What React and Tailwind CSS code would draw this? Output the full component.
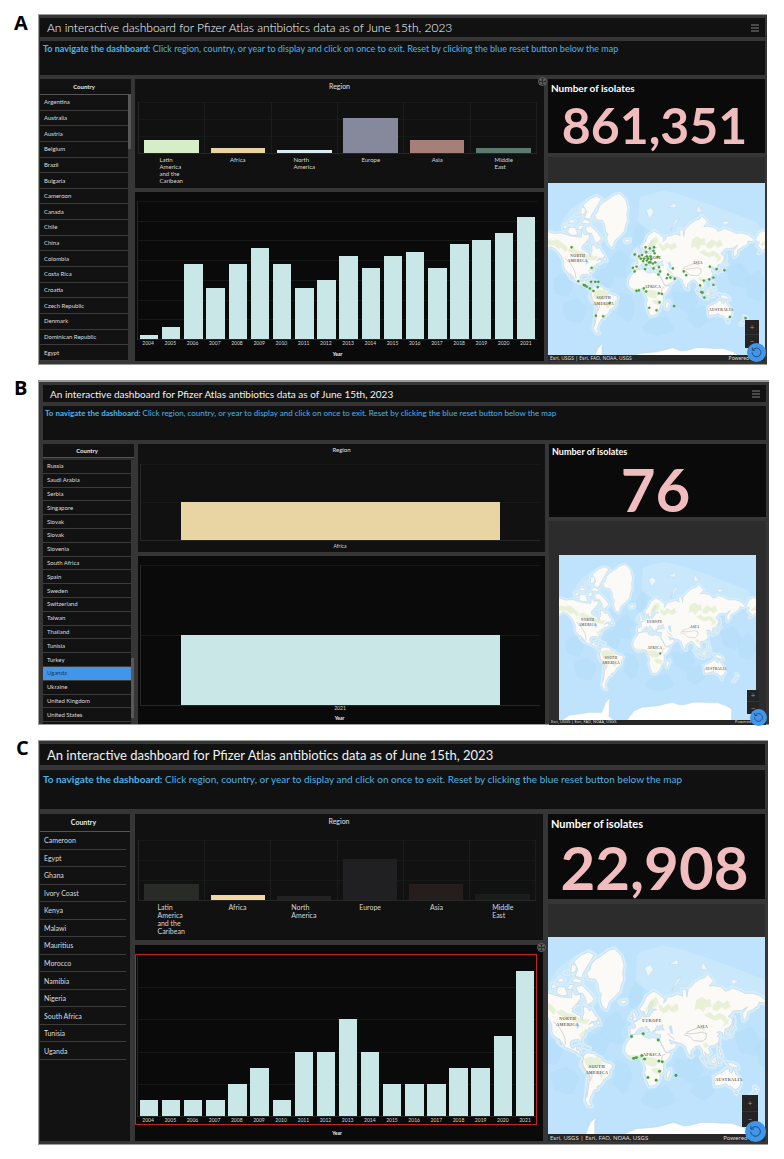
import React, { useState } from 'react';
import clsx from 'clsx';

const YEARS = ['2004', '2005', '2006', '2007', '2008', '2009', '2010', '2011', '2012', '2013', '2014', '2015', '2016', '2017', '2018', '2019', '2020', '2021'];

const toYearBars = (values) => values.map((value, i) => ({ label: YEARS[i], value, color: '#c9e7e7' }));

const ALL_COUNTRIES = ['Argentina', 'Australia', 'Austria', 'Belgium', 'Brazil', 'Bulgaria', 'Cameroon', 'Canada', 'Chile', 'China', 'Colombia', 'Costa Rica', 'Croatia', 'Czech Republic', 'Denmark', 'Dominican Republic', 'Egypt'];
const LAST_COUNTRIES = ['Russia', 'Saudi Arabia', 'Serbia', 'Singapore', 'Slovak', 'Slovak', 'Slovenia', 'South Africa', 'Spain', 'Sweden', 'Switzerland', 'Taiwan', 'Thailand', 'Tunisia', 'Turkey', 'Uganda', 'Ukraine', 'United Kingdom', 'United States'];
const AFRICAN_COUNTRIES = ['Cameroon', 'Egypt', 'Ghana', 'Ivory Coast', 'Kenya', 'Malawi', 'Mauritius', 'Morocco', 'Namibia', 'Nigeria', 'South Africa', 'Tunisia', 'Uganda'];

// site positions, in degrees of longitude and mercator degrees (down is positive)
const AFRICA_SITES = [[-7, -36], [10, -40], [32, -31], [-4, -4], [0, -5], [8, -8], [12, -3], [33, 0], [38, 1], [34, 15], [17, 24], [29, 28], [58, 21]];
const OTHER_SITES = [
  [-111, -76], [-78, -42], [-100, -20], [-91, -14], [-89, -13], [-86, -11], [-81, -8], [-79, -19], [-72, -19], [-67, -19], [-68, -10], [-75, -4], [-48, 16], [-71, 37], [-59, 38],
  [-10, -42], [-4, -44], [12, -47], [24, -41], [33, -43], [35, -36], [48, -31], [46, -25], [52, -26], [59, -24], [56, -41], [74, -36], [78, -30],
  [-7, -64], [0, -61], [5, -63], [3, -57], [11, -76], [18, -74], [25, -76], [24, -70], [26, -66], [12, -68], [13, -61], [19, -61], [7, -53], [13, -54], [17, -51], [20, -56], [19, -51], [23, -49], [27, -51], [31, -60], [8, -57], [15, -57],
  [117, -44], [128, -40], [141, -38], [123, -26], [116, -23], [107, -21], [123, -14], [101, -13], [103, -2], [105, -1], [108, 7], [150, 39], [176, 41],
];

const LAND = [
  '-168,66 -162,70 -156,71.3 -141,69.7 -128,70 -115,68.5 -108,68 -95,67.5 -94,72 -90,69 -82,69.5 -82,67 -87,64.5 -94,61 -94,58.5 -88,56.5 -82,55 -82,52.5 -79,51.3 -79,54.5 -77,57 -78,62.3 -72,61.5 -69,59 -65,60 -61,56 -56,52.5 -60,50 -66,50 -70,47 -64,49 -61,46 -66,43.8 -70,43.5 -70,41.5 -74,40.5 -76,37 -76,35 -81,31.5 -80,26 -82,27 -84,30 -89,30 -94,29.5 -97,27 -97,22 -95,18.5 -91,18.7 -90,21 -87,21.3 -88,16 -83,15 -83.5,11 -81,9 -77,8.5 -78,7.3 -83,8.3 -87,13 -94,16 -105,20 -106,23 -112,29.5 -114.5,31.5 -110,23 -115,28 -117,32.5 -121,35 -124,40 -124,47 -130,54 -138,59 -146,60.8 -153,58.5 -162,55 -158,58.5 -165,61.5 -161,64 -166,65',
  '-73,78 -68,79 -66,80.5 -60,81.5 -52,82.2 -40,83.3 -32,83.5 -22,82.3 -18,80 -20,78 -19,76 -22,74 -24,71 -27,70 -32,68 -38,66 -40,65 -43.5,60 -47,61 -50,62.5 -52,65 -53,67 -51,69.5 -55,71 -56,74 -60,76 -70,76.2',
  '-62,67 -68,70 -74,72 -80,73.7 -89,73 -85,70 -79,70 -75,67.5 -73,64.5 -66,62 -69,64 -65,65',
  '-117,71 -115,73 -110,73 -105,73 -101,69 -110,68.7 -117,70',
  '-125,72 -123,74.3 -116,73',
  '-90,77 -86,79 -92,81 -80,82.5 -70,83 -62,82.5 -68,81 -75,79 -78,78 -80,76.5',
  '-95,75 -90,76.5 -80,75.5 -82,74.5',
  '-117,75 -112,76.5 -105,75.7 -108,75',
  '-96,78 -95,80.5 -88,80 -89,78.5',
  '-102,72 -98,74 -91,73.8 -95,72',
  '-105,78 -100,78.5 -99,77.8',
  '-86,64 -82,65.5 -80,64',
  '-59,48 -56,51.5 -53,47',
  '-85,22 -80,23 -74,20 -78,20',
  '-74,19.5 -68.5,18.5 -72,18',
  '-77,8.5 -72,12 -62,10.7 -57,6 -52,5 -50,0 -44,-2.5 -39,-3.5 -35,-6 -36,-10 -39,-13 -39,-18 -41,-22 -48,-26 -49,-29 -53,-33.5 -58,-35 -57,-38 -62,-39 -65,-43 -67,-46 -69,-51 -66,-55 -71,-54.5 -75,-50 -73,-42 -71.5,-30 -70,-18 -76,-14 -81,-6 -80,-2 -78,2',
  '-6,36 10,37.3 11,33.5 20,31 22,33 32,31 34,27.5 38,21 43,12 51,12 48,5 40,-3 40,-11 40,-15 35,-20 35,-24 31,-30 26,-34 19,-34.5 15,-27 12,-17 14,-11 12,-5 9,0 9,4.5 4,6.3 -3,5 -8,4.3 -13,8 -17.5,14.7 -16.5,21 -13,27.5 -9.5,31',
  '49.5,-12 50,-16 47,-25 44,-24 44,-17',
  '-9,37 -9,43.3 -1.5,43.5 -1.5,47 -4.5,48.4 2,51 8,54 8.5,57 10.5,57.5 10.5,54.5 14,54 20,54.8 21,57 24,58 24,59.3 30,60 25,60.3 21.5,61 25,65 22,65.7 17.5,62 18,60 16,56.5 13,55.5 11,59 7,58 5,61 10,64 15,68.5 25,71 31,70 41,67 40,64.5 44,66 45,68 54,68.5 60,69.5 68,68.5 67,72 73,71.5 74,68 76,72 80,73 87,75 93,76 100,76.5 104,77.7 113,75.5 107,73.3 113,73.5 123,73 128,72 130,71 137,71.5 140,72.5 150,71.5 160,69.8 170,70 180,69 190,66 187,64.5 180,65 178,62.5 170,60 163,58 162,54 157,51 156,57 163,62 155,59.5 142,59 135,54.5 141,52 140,48 135,43.5 130,42.5 129,36 126,34.5 126.5,38 122,40 118,39 122,37 119,35 122,31 120,26 114,22.3 108,21.5 106,18 109,12 105,8.7 100,13.5 103,1.5 98,9 97,16.5 92,22 87,21 80,15 80,10 77.5,8 73,17 72,21 67,24.5 57,27 51,29 48,30 51,24 56.5,26 59.5,22.5 55,17.5 45,13 43,13 39,21 35,28 34.5,31.5 36,36 28,36.7 26,39.5 29,41 36,41.5 41,41.5 38,44.5 39,47 35,46 33,44.5 31,46.5 28,43 28,41 24,40.5 23,37 20,40 19,42 13.5,45.7 13,43.5 18,40 16,38 12,42 9,44.3 4,43.3 0,40 -1,37.5 -5.5,36',
  '-5,50 1,51.5 0,53.5 -3,58.5 -6,57 -3,54 -5,52',
  '-10,52 -6,52.3 -6,55 -9,54',
  '-24,65.5 -22,64 -15,64.5 -15,66.3 -20,66',
  '130,32 133,34 139,35 141,40 143,43 145,43.5 141,45.3 140,41 139,38 132,35',
  '142,46.5 144,50 142.5,54',
  '95,5.5 104,-2 106,-6 101,-3',
  '105,-6.5 114,-7 114,-8.5 106,-7.5',
  '109,1 117,7 118,1 115,-4 110,-2',
  '119,-5 120,1 125,1.5 121,-1 123,-5',
  '131,-1 135,-3 141,-2.7 147,-6 150,-10.5 143,-9 138,-8',
  '120,18 122,18 124,12 126,7 122,8 121,14',
  '80,9.5 82,7 80.5,6',
  '120,25 122,25 121,22',
  '114,-22 122,-18 129,-15 131,-11.5 137,-12 136,-15 140,-17.5 142.5,-10.8 146,-19 153,-26 153,-32 150,-37 144,-38.5 138,-34 135,-34.5 131,-31.5 124,-33.5 115,-34.5',
  '145,-41 148,-41 147,-43.5',
  '173,-35 178,-38 175,-41.5 174,-39',
  '173,-41 170,-46 167,-45.5',
];

const ICE = '-180,-78 -150,-77 -135,-74.5 -120,-74 -100,-73 -88,-73 -75,-73 -68,-67 -64,-65 -58,-63.5 -61,-66 -61,-72 -62,-75 -45,-78 -30,-77 -20,-74 -15,-72 0,-70 15,-69.5 30,-69 45,-67.5 55,-66.5 70,-68.5 80,-68 95,-66.5 110,-66.5 125,-67 140,-67 155,-69 165,-71 165,-78 180,-78 180,-85 -180,-85';

const ISLETS = [
  '12,79.5 16,80 20,80.3 25,79 17,76.8',
  '52,71 55,73 57,73.5 67,76.8 60,76 54,73',
  '48,80.5 54,81 60,81.5 62,80.3',
  '95,79 97,81 105,79',
  '138,75.5 143,75.8 150,75.3 142,74',
];

const FOREST = [
  '-160,62 -150,66 -142,65 -135,66 -125,63 -118,60 -121,56 -128,60 -133,59 -140,62 -150,62',
  '-118,58 -110,60 -100,57 -92,56 -84,53 -76,52 -68,52 -72,48 -82,49 -90,50 -100,53 -110,55',
  '-84,36 -78,40 -72,43 -76,38 -82,32',
  '-76,3 -68,6 -60,5 -52,2 -50,-4 -56,-9 -62,-11 -70,-10 -74,-5',
  '-51,-15 -47,-18 -51,-24 -55,-20',
  '9,4 16,5 24,5 30,3 31,-3 27,-8 20,-7 12,-3',
  '-12,8 -5,8 5,8 8,6 0,6 -8,5',
  '22,-12 30,-10 37,-13 34,-19 26,-17',
  '13,58 16,62 21,66 29,68 32,65 28,62 18,61',
  '33,64 40,61 46,64 52,62 60,64 62,60 54,58 48,60 40,57 34,60',
  '88,66 96,68 104,66 108,67 110,62 102,62 98,58 92,61 86,60',
  '112,63 120,66 128,64 134,66 138,62 130,60 125,62 118,59 112,60',
  '100,56 108,58 114,55 122,57 130,55 134,51 128,50 124,53 116,51 108,53',
  '128,46 134,48 136,52 131,51',
  '98,24 102,26 106,22 101,19',
  '111,1 115,4 117,2 114,-2',
];

const DEEP = [
  '-40,50 -30,55 -22,48 -30,40 -26,30 -38,32 -48,40',
  '-66,30 -54,34 -46,24 -52,14 -64,18',
  '-30,-5 -18,-8 -12,-22 -18,-38 -30,-30 -24,-18',
  '-136,20 -124,26 -114,14 -120,0 -134,4',
  '-120,-20 -104,-14 -90,-24 -98,-40 -116,-36',
  '60,-2 74,-6 86,2 92,-14 82,-26 66,-18',
  '90,-30 104,-26 110,-38 98,-46 86,-40',
  '150,34 166,40 178,28 172,14 156,18',
  '182,20 196,30 206,10 196,-6 184,0',
  '-4,70 4,74 2,66 -6,64',
  '20,-44 44,-40 52,-50 30,-54 12,-50',
];

const RIDGES = [
  '-79,0 -78,-7 -75,-13 -70,-17 -68,-24 -70,-32 -71,-40 -73,-47',
  '-66,-16 -65,-22 -68,-28',
  '70,36 78,34 84,29 92,28 98,28 102,32 103,37 96,39 90,38 80,37 72,38',
  '74,39 84,42 92,44 100,42',
  '-122,50 -114,45 -108,38 -105,32 -104,24',
  '36,0 38,8 42,10',
  '46,38 50,34 56,30',
];

const LABELS = [
  ['NORTH', -101, -60],
  ['AMERICA', -101, -51],
  ['SOUTH', -58, 10],
  ['AMERICA', -58, 19],
  ['EUROPE', 23, -57],
  ['AFRICA', 23, -8],
  ['ASIA', 97, -48],
  ['AUSTRALIA', 136, 30],
];

const mercator = (lat) => -(180 / Math.PI) * Math.log(Math.tan(Math.PI / 4 + (lat * Math.PI) / 360));

const project = (line) =>
  line
    .split(' ')
    .map((pair) => {
      const [lon, lat] = pair.split(',').map(Number);
      return `${lon},${mercator(lat).toFixed(2)}`;
    })
    .join(' ');

function World() {
  return (
    <>
      {DEEP.map((p) => <polygon key={p} points={project(p)} fill="#b0dbfa" opacity="0.35" stroke="#b0dbfa" strokeWidth="12" strokeLinejoin="round" />)}
      <g fill="#d6eefc" opacity="0.5" stroke="#d6eefc" strokeLinejoin="round">
        <polygon points={project('10,82 40,83 60,82.5 110,80 150,77 190,73 190,71 140,71 100,76 60,70 30,72 8,76')} strokeWidth="18" />
        <polygon points={project('20,80 60,81 110,79 150,76 185,72 140,73 100,77 60,72 30,73')} strokeWidth="8" />
        <polygon points={project('-125,74 -110,79 -85,82 -60,82 -62,76 -60,66 -80,60 -92,61 -118,70')} strokeWidth="10" />
      </g>
      <g fill="#d6eefc" stroke="#d6eefc" strokeWidth="7" strokeLinejoin="round">
        {LAND.map((p) => <polygon key={p} points={project(p)} />)}
      </g>
      <g fill="#fbfaf7" stroke="#b3cbd9" strokeWidth="0.7" strokeLinejoin="round">
        {LAND.map((p) => <polygon key={p} points={project(p)} />)}
        <polygon points={project(ICE)} fill="#ffffff" />
      </g>
      <g fill="#edf6fb" stroke="#b9ced9" strokeWidth="0.6">
        {ISLETS.map((p) => <polygon key={p} points={project(p)} />)}
      </g>
      <g fill="#e0ecca" opacity="0.7">
        {FOREST.map((p) => <polygon key={p} points={project(p)} stroke="#e0ecca" strokeWidth="1" strokeDasharray="3 2" />)}
      </g>
      <g fill="#c4e5fa">
        <polygon points={project('47,45 52,46.5 53,42 54,37 50,37.5 49,41')} />
        <polygon points={project('-92,47 -85,48.5 -84,46 -80,44 -84,45 -87,42 -88,46')} />
        <polygon points={project('32,0 34,0 33,-2.5')} />
      </g>
      <g fill="none" stroke="#b8aba2" strokeWidth="1" opacity="0.7">
        {RIDGES.map((p) => <polyline key={p} points={project(p)} />)}
      </g>
    </>
  );
}

function SiteMap({ viewBox, sites, className }) {
  return (
    <svg viewBox={viewBox} preserveAspectRatio="xMidYMin slice" className={clsx('block w-full bg-[#bfe3fc]', className)} role="img" aria-label="World map of isolates">
      <World />
      <g transform="translate(360 0)"><World /></g>
      {LABELS.map(([text, x, y]) => (
        <text key={text + y} x={x} y={y} textAnchor="middle" fontSize="6" fill="#6b6763" className="font-['Liberation_Serif',serif] font-bold tracking-widest">{text}</text>
      ))}
      {sites.map(([x, y]) => <circle key={`${x} ${y}`} cx={x} cy={y} r="1.9" fill="#43a832" stroke="#2c7a22" strokeWidth="0.4" />)}
    </svg>
  );
}

function BarChart({ bars, rows, plotClass, labelClass, dividers }) {
  return (
    <>
      <div className={clsx('relative border-l border-b border-[#262828]', plotClass)}>
        <div className="absolute inset-0 flex flex-col">
          {Array.from({ length: rows }, (_, i) => <div key={i} className="flex-1 border-t border-[#171818]" />)}
        </div>
        <div className="relative flex h-full">
          {bars.map((bar) => (
            <div key={bar.label} className={clsx('flex flex-1 items-end justify-center', dividers && 'border-r border-[#1b1c1c]')}>
              <div className={bars.length === 1 ? 'w-4/5' : 'w-5/6'} style={{ height: `${bar.value}%`, backgroundColor: bar.color }} />
            </div>
          ))}
        </div>
      </div>
      <div className={clsx('flex text-[#d6d6d6]', labelClass)}>
        {bars.map((bar) => (
          <div key={bar.label} className="flex flex-1 justify-center">
            <span className="whitespace-pre-line">{bar.label}</span>
          </div>
        ))}
      </div>
    </>
  );
}

function ExpandButton() {
  return (
    <button type="button" aria-label="Expand" className="absolute -top-[2px] -right-[3px] z-10 size-[9px] rounded-full bg-[#2b2b2b]">
      <svg viewBox="0 0 9 9" className="size-full" fill="none" stroke="#8a8a8a" strokeWidth="0.6">
        <circle cx="4.5" cy="4.5" r="4" />
        <path d="M2.5 3.8V2.5h1.3M5.2 2.5h1.3v1.3M6.5 5.2v1.3H5.2M3.8 6.5H2.5V5.2M2.5 2.5l1.4 1.4M6.5 2.5L5.1 3.9M6.5 6.5L5.1 5.1M2.5 6.5l1.4-1.4" />
      </svg>
    </button>
  );
}

function CountryList({ countries, initial, s, thumbClass }) {
  const [selected, setSelected] = useState(initial);

  return (
    <nav className={clsx('flex shrink-0 flex-col bg-[#121212]', s.country)} aria-label="Country">
      <h2 className={clsx('pr-[3px] text-center font-bold text-[#e8e8e8]', s.countryHead)}>Country</h2>
      <div className={clsx('flex', s.listWrap)}>
        <ul className={clsx('flex flex-1 flex-col', s.list)}>
          {countries.map((name, i) => (
            <li key={name + i} className={clsx('flex flex-1 border-b border-[#3c3c3c]', selected === name ? 'bg-[#4296ea] text-[#173a61]' : 'text-[#dcdcdc]')}>
              <button type="button" className={clsx('flex-1 pl-[4px] text-left', s.listText)} onClick={() => setSelected(selected === name ? null : name)}>{name}</button>
            </li>
          ))}
        </ul>
        {thumbClass && (
          <div className="w-[3px] bg-[#363636]">
            <div className={clsx('bg-[#585858]', thumbClass)} />
          </div>
        )}
      </div>
    </nav>
  );
}

function Dashboard({ letter, s, countries, initial, thumbClass, regions, regionRows, years, yearRows, total, viewBox, sites, menu, expand }) {
  return (
    <section className="flex font-[Lato,sans-serif]">
      <div className={clsx("w-[38px] shrink-0 font-['Open_Sans',sans-serif] text-[20px] leading-[16px] font-bold text-black", s.letter)}>{letter}</div>
      <div className={clsx('flex min-w-0 flex-1 flex-col border-[#9b9d9b] bg-[#363636]', s.frame)}>
        <header className={clsx('flex items-center justify-between bg-[#111111]', s.header)}>
          <h1 className={clsx('whitespace-nowrap', s.title)}>An interactive dashboard for Pfizer Atlas antibiotics data as of June 15th, 2023</h1>
          {menu && (
            <button type="button" aria-label="Menu" className="mr-[6px] h-[8px] w-[8px]">
              <svg viewBox="0 0 8 8" className="size-full" stroke="#8f8f8f" strokeWidth="0.9"><path d="M0 1h8M0 4h8M0 7h8" /></svg>
            </button>
          )}
        </header>
        <p className={clsx('whitespace-nowrap bg-[#111111] text-[#4fb3e6]', s.intro)}>
          <strong>To navigate the dashboard:</strong> Click region, country, or year to display and click on once to exit. Reset by clicking the blue reset button below the map
        </p>

        <div className={clsx('flex', s.body)}>
          <CountryList countries={countries} initial={initial} s={s} thumbClass={thumbClass} />

          <div className={clsx('flex min-w-0 flex-1 flex-col', s.charts)}>
            <div className={clsx('relative shrink-0 bg-[#111111]', s.region)}>
              {expand === 'region' && <ExpandButton />}
              <h2 className={clsx('text-center text-[#e0e0e0]', s.regionTitle)}>Region</h2>
              <div className={s.regionFrame}>
                <BarChart bars={regions} rows={regionRows} plotClass={s.regionPlot} labelClass={s.regionLabels} dividers={s.dividers} />
              </div>
            </div>
            <div className={clsx('relative min-h-0 flex-1 bg-[#0a0a0a]', s.year)}>
              {expand === 'year' && <ExpandButton />}
              <div className={s.yearFrame}>
                <BarChart bars={years} rows={yearRows} plotClass={s.yearPlot} labelClass={s.yearLabels} />
              </div>
              <p className={clsx('pr-[4px] text-center text-[5px] font-bold text-[#ededed]', s.yearTitle)}>Year</p>
            </div>
          </div>

          <div className={clsx('flex w-[217px] shrink-0 flex-col', s.side)}>
            <div className={clsx('flex flex-col bg-[#0a0a0a]', s.stat)}>
              <h2 className={clsx('pl-[3px] font-bold text-white', s.statTitle)}>Number of isolates</h2>
              <div className={clsx('flex flex-1 items-center justify-center pr-[4px] leading-none font-bold text-[#f0bcbe]', s.total)}>{total}</div>
            </div>
            <div className={clsx('relative flex flex-1 flex-col bg-[#2c2c2c]', s.mapPanel)}>
              <div className={clsx('min-h-0 flex-1', s.mapInset)}>
                <SiteMap viewBox={viewBox} sites={sites} className="h-full" />
              </div>
              <div className={clsx("flex items-center justify-between bg-[#262626] pr-[9px] pl-[2px] font-['Noto_Sans',sans-serif] text-[#dedede]", s.credit)}>
                <span>Esri, USGS | Esri, FAO, NOAA, USGS</span>
                <span>Powered by</span>
              </div>
              <div className={clsx('absolute flex flex-col bg-[#242424] text-[#9a9a9a]', s.zoom)}>
                <button type="button" className="flex flex-1 items-center justify-center border-b border-[#353535] text-[8px] leading-none" aria-label="Zoom in">+</button>
                <button type="button" className="flex flex-1 items-center justify-center text-[8px] leading-none" aria-label="Zoom out">−</button>
              </div>
              <button type="button" aria-label="Reset" className={clsx('absolute -right-px rounded-full bg-[#4296ea]', s.reset)}>
                <svg viewBox="0 0 20 20" className="size-full" fill="none" stroke="#1b426c" strokeWidth="0.9">
                  <path d="M6.3 7.2a4.6 4.6 0 1 1-.9 2.9" />
                  <path d="M5.6 4.8v2.9h2.9" />
                </svg>
              </button>
            </div>
          </div>
        </div>
      </div>
    </section>
  );
}

const REGION_NAMES = ['Latin\nAmerica\nand the\nCaribean', 'Africa', 'North\nAmerica', 'Europe', 'Asia', 'Middle\nEast'];
const REGION_VALUES = [26, 9, 6, 69, 26, 10];
const REGION_COLORS = ['#d7edc8', '#e9d4a4', '#dcecf0', '#86889b', '#a67f79', '#5c7a6f'];
const DIMMED_COLORS = ['#292b26', '#f0d7a5', '#222224', '#202023', '#251e1d', '#191e1c'];

const regionBars = (colors, values) => REGION_NAMES.map((label, i) => ({ label, value: values[i], color: colors[i] }));

const large = {
  letter: 'pl-[14px] pt-px',
  frame: 'gap-[4px] border-t border-l border-b pt-[3px] pr-[2px] pb-[3px] pl-px',
  header: 'h-[19px] pl-[7px]',
  title: 'text-[12px] leading-[18px] font-light text-white',
  intro: 'h-[34px] pl-[3px] text-[9px] leading-[16px]',
  body: 'h-[282px] gap-[4px]',
  country: 'w-[91px]',
  countryHead: 'h-[16px] border-b border-[#555555] text-[6px] leading-[15px]',
  listWrap: 'flex-1',
  list: '',
  listText: 'text-[6px] leading-[14px]',
  charts: 'gap-[4px]',
  region: 'h-[109px]',
  regionTitle: 'h-[23px] text-[7px] leading-[14px]',
  regionFrame: 'mr-[7px] ml-[3px]',
  regionPlot: 'h-[52px]',
  regionLabels: 'pt-[2px] text-[6px] leading-[7px]',
  dividers: true,
  year: 'pt-[9px]',
  yearFrame: 'mr-[7px] pl-[2px]',
  yearPlot: 'h-[139px]',
  yearLabels: 'text-[5px] leading-[7px]',
  yearTitle: 'leading-[14px]',
  side: 'gap-[4px]',
  stat: 'h-[74px]',
  statTitle: 'text-[10px] leading-[18px]',
  total: 'text-[50px]',
  mapPanel: 'pt-[26px]',
  mapInset: '',
  credit: 'h-[6px] text-[5px] leading-none',
  zoom: 'right-[6px] bottom-[13px] h-[28px] w-[14px]',
  reset: '-bottom-px size-[19px]',
};

const small = {
  ...large,
  letter: 'pl-[14px]',
  frame: 'gap-[4px] -mr-[2px] border-t-2 border-l border-b pt-[3px] pr-[3px] pl-[4px]',
  header: 'h-[17px] pl-[7px]',
  title: 'text-[10px] leading-[16px] text-[#f2f2f2]',
  intro: 'h-[34px] pl-[2px] text-[8px] leading-[14px]',
  body: 'h-[280px] gap-[4px]',
  countryHead: 'h-[14px] border-b border-[#555555] text-[6px] leading-[13px]',
  listWrap: 'flex-1 border-t-2 border-[#2c2c2c]',
  list: 'pb-[2px]',
  listText: 'text-[6px] leading-[12px]',
  region: 'h-[108px]',
  regionTitle: 'h-[20px] text-[6px] leading-[12px]',
  regionFrame: 'mr-[5px] ml-[2px]',
  regionPlot: 'h-[77px]',
  regionLabels: 'pt-[2px] text-[5px] leading-[7px]',
  dividers: false,
  yearFrame: 'mr-[5px] pl-[2px]',
  yearPlot: 'h-[141px]',
  yearLabels: 'text-[5px] leading-[5px]',
  yearTitle: 'leading-[14px]',
  stat: 'h-[73px]',
  statTitle: 'text-[9px] leading-[15px]',
  total: 'text-[60px]',
  mapPanel: 'pt-[34px]',
  mapInset: 'px-[10px]',
  credit: 'h-[5px] text-[4px] leading-none',
  zoom: 'right-[7px] bottom-[11px] h-[24px] w-[12px]',
  reset: '-bottom-px size-[17px]',
};

const tall = {
  ...large,
  letter: 'pl-[16px]',
  frame: 'gap-[5px] -mr-px border-t border-l border-b pt-[3px] pr-[3px] pb-[3px] pl-px',
  header: 'h-[21px] pl-[7px]',
  title: 'text-[13px] leading-[20px] text-[#f2f2f2]',
  intro: 'h-[39px] pl-[3px] text-[10px] leading-[18px]',
  body: 'h-[327px] gap-[5px]',
  country: 'w-[90px]',
  countryHead: 'h-[18px] border-b border-[#555555] text-[7px] leading-[17px]',
  listWrap: 'h-[228px] pr-[4px]',
  listText: 'text-[7px] leading-[16px]',
  charts: 'gap-[5px]',
  region: 'h-[126px]',
  regionTitle: 'h-[26px] text-[7px] leading-[14px]',
  regionPlot: 'h-[61px]',
  regionLabels: 'pt-[2px] text-[7px] leading-[8px]',
  yearFrame: 'mr-[6px] border border-[#c0261d] pl-px',
  yearPlot: 'h-[162px]',
  yearLabels: 'text-[5px] leading-[7px]',
  yearTitle: 'leading-[16px]',
  side: 'gap-[5px]',
  stat: 'h-[85px]',
  statTitle: 'text-[11px] leading-[20px]',
  total: 'text-[60px]',
  mapPanel: 'pt-[33px]',
  credit: 'h-[7px] text-[6px] leading-none',
  zoom: 'right-[7px] bottom-[14px] h-[32px] w-[16px]',
  reset: '-bottom-px size-[21px]',
};

export default function App() {
  return (
    <main className="flex flex-col gap-[15px] bg-white pt-[14px] pr-[17px] pb-[14px]">
      <Dashboard
        letter="A"
        s={large}
        countries={ALL_COUNTRIES}
        thumbClass="h-[54px]"
        regions={regionBars(REGION_COLORS, REGION_VALUES)}
        regionRows={3}
        years={toYearBars([1, 3, 19, 13, 19, 23, 19, 13, 15, 21, 18, 21, 22, 18, 24, 25, 27, 31].map((n) => (n / 35) * 100))}
        yearRows={7}
        total="861,351"
        viewBox="-150 -182 358 284"
        sites={[...OTHER_SITES, ...AFRICA_SITES]}
        expand="region"
        menu
      />
      <Dashboard
        letter="B"
        s={small}
        countries={LAST_COUNTRIES}
        initial="Uganda"
        thumbClass="mt-[198px] h-[60px]"
        regions={[{ label: 'Africa', value: 50, color: '#e9d4a4' }]}
        regionRows={2}
        years={[{ label: '2021', value: 50, color: '#c9e7e7' }]}
        yearRows={2}
        total="76"
        viewBox="-154 -182 364 304"
        sites={[[33, 0]]}
        menu
      />
      <Dashboard
        letter="C"
        s={tall}
        countries={AFRICAN_COUNTRIES}
        regions={regionBars(DIMMED_COLORS, REGION_VALUES)}
        regionRows={3}
        years={toYearBars([10, 10, 10, 10, 20, 30, 10, 40, 40, 60, 40, 20, 20, 20, 30, 30, 50, 90])}
        yearRows={5}
        total="22,908"
        viewBox="-130 -182 319 289"
        sites={AFRICA_SITES}
        expand="year"
      />
    </main>
  );
}
